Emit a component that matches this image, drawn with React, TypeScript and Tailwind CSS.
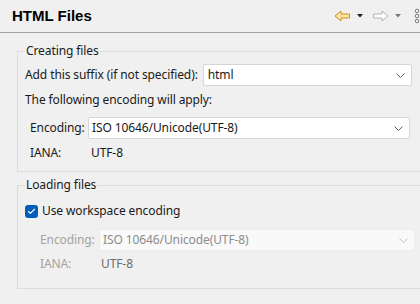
import { Check } from 'lucide-react';

function Chevron({ muted }: { muted?: boolean }) {
  return (
    <svg width="9" height="5" viewBox="0 0 9 5" className="shrink-0">
      <path d="M0.5 0.5 L4.5 4.5 L8.5 0.5" fill="none" stroke={muted ? '#c4c4c4' : '#606060'} strokeWidth="1" />
    </svg>
  );
}

function Combo({ value, className, disabled }: { value: string; className: string; disabled?: boolean }) {
  return (
    <div
      className={
        'h-[22px] flex items-center justify-between pr-[6px] rounded-[2px] border ' +
        (disabled ? 'bg-[#f9f9f9] border-[#ececec] text-[#8c8c8c] ' : 'bg-white border-[#d6d6d6] text-[#1a1a1a] ') +
        className
      }
    >
      <span>{value}</span>
      <Chevron muted={disabled} />
    </div>
  );
}

export default function App() {
  return (
    <div className="w-[420px] h-[304px] overflow-hidden bg-[#f0f0f0] text-[12px] leading-[16px] tracking-[-0.1px] text-[#1a1a1a] font-['Noto_Sans',sans-serif]">
      {/* Header */}
      <div className="h-[33px] border-b border-[#a3a3a3] flex items-center justify-between pl-3">
        <h1 className="font-['Liberation_Sans',sans-serif] font-bold text-[15px] tracking-normal text-black">HTML Files</h1>
        <div className="flex items-center gap-[6px] mr-[-5px]">
          <svg width="17" height="12" viewBox="0 0 17 12">
            <path d="M1 6 L7 1 L7 4 L15.5 4 L15.5 8 L7 8 L7 11 Z" fill="#fbe3a0" stroke="#d28f1c" strokeWidth="1" strokeLinejoin="round" />
          </svg>
          <svg width="6" height="4" viewBox="0 0 6 4">
            <path d="M0 0 L6 0 L3 3.5 Z" fill="#1f1f1f" />
          </svg>
          <svg width="17" height="12" viewBox="0 0 17 12" className="ml-[3px]">
            <path d="M16 6 L10 1 L10 4 L1.5 4 L1.5 8 L10 8 L10 11 Z" fill="#ffffff" stroke="#b4b4b4" strokeWidth="1" strokeLinejoin="round" />
          </svg>
          <svg width="6" height="4" viewBox="0 0 6 4">
            <path d="M0 0 L6 0 L3 3.5 Z" fill="#7a7a7a" />
          </svg>
          <svg width="12" height="16" viewBox="0 0 12 16" className="ml-[6px]">
            <circle cx="4" cy="3" r="1.8" fill="none" stroke="#7a7a7a" strokeWidth="1" />
            <circle cx="4" cy="8" r="1.8" fill="none" stroke="#7a7a7a" strokeWidth="1" />
            <circle cx="4" cy="13" r="1.8" fill="none" stroke="#7a7a7a" strokeWidth="1" />
          </svg>
        </div>
      </div>

      {/* Creating files */}
      <fieldset className="ml-[17px] mr-[-10px] mt-[10px] border border-[#dcdcdc] pl-[7px] pt-[5px] pb-[10px]">
        <legend className="px-[1px]">Creating files</legend>
        <div className="flex items-center gap-[5px]">
          <span>Add this suffix (if not specified):</span>
          <Combo value="html" className="w-[209px] pl-[4px]" />
        </div>
        <div className="mt-[6px]">The following encoding will apply:</div>
        <div className="flex items-center mt-[9px] pl-[5px]">
          <span className="w-[58px]">Encoding:</span>
          <Combo value="ISO 10646/Unicode(UTF-8)" className="w-[322px] pl-[3px]" />
        </div>
        <div className="flex items-center mt-[6px] pl-[5px]">
          <span className="w-[61px]">IANA:</span>
          <span>UTF-8</span>
        </div>
      </fieldset>

      {/* Loading files */}
      <fieldset className="ml-[17px] mr-[-10px] mt-[5px] border border-[#dcdcdc] pl-[7px] pt-[10px] pb-[16px]">
        <legend className="px-[1px]">Loading files</legend>
        <div className="flex items-center gap-[4px]">
          <span className="w-[13px] h-[13px] rounded-[3px] bg-[#005fb8] flex items-center justify-center">
            <Check className="w-[9px] h-[9px] text-white" strokeWidth={3} />
          </span>
          <span>Use workspace encoding</span>
        </div>
        <div className="flex items-center mt-[10px] pl-[15px]">
          <span className="w-[59px] text-[#a3a3a3]">Encoding:</span>
          <Combo value="ISO 10646/Unicode(UTF-8)" className="w-[316px] pl-[3px]" disabled />
        </div>
        <div className="flex items-center mt-[5px] pl-[15px]">
          <span className="w-[61px] text-[#a3a3a3]">IANA:</span>
          <span className="text-[#6d6d6d]">UTF-8</span>
        </div>
      </fieldset>
    </div>
  );
}
